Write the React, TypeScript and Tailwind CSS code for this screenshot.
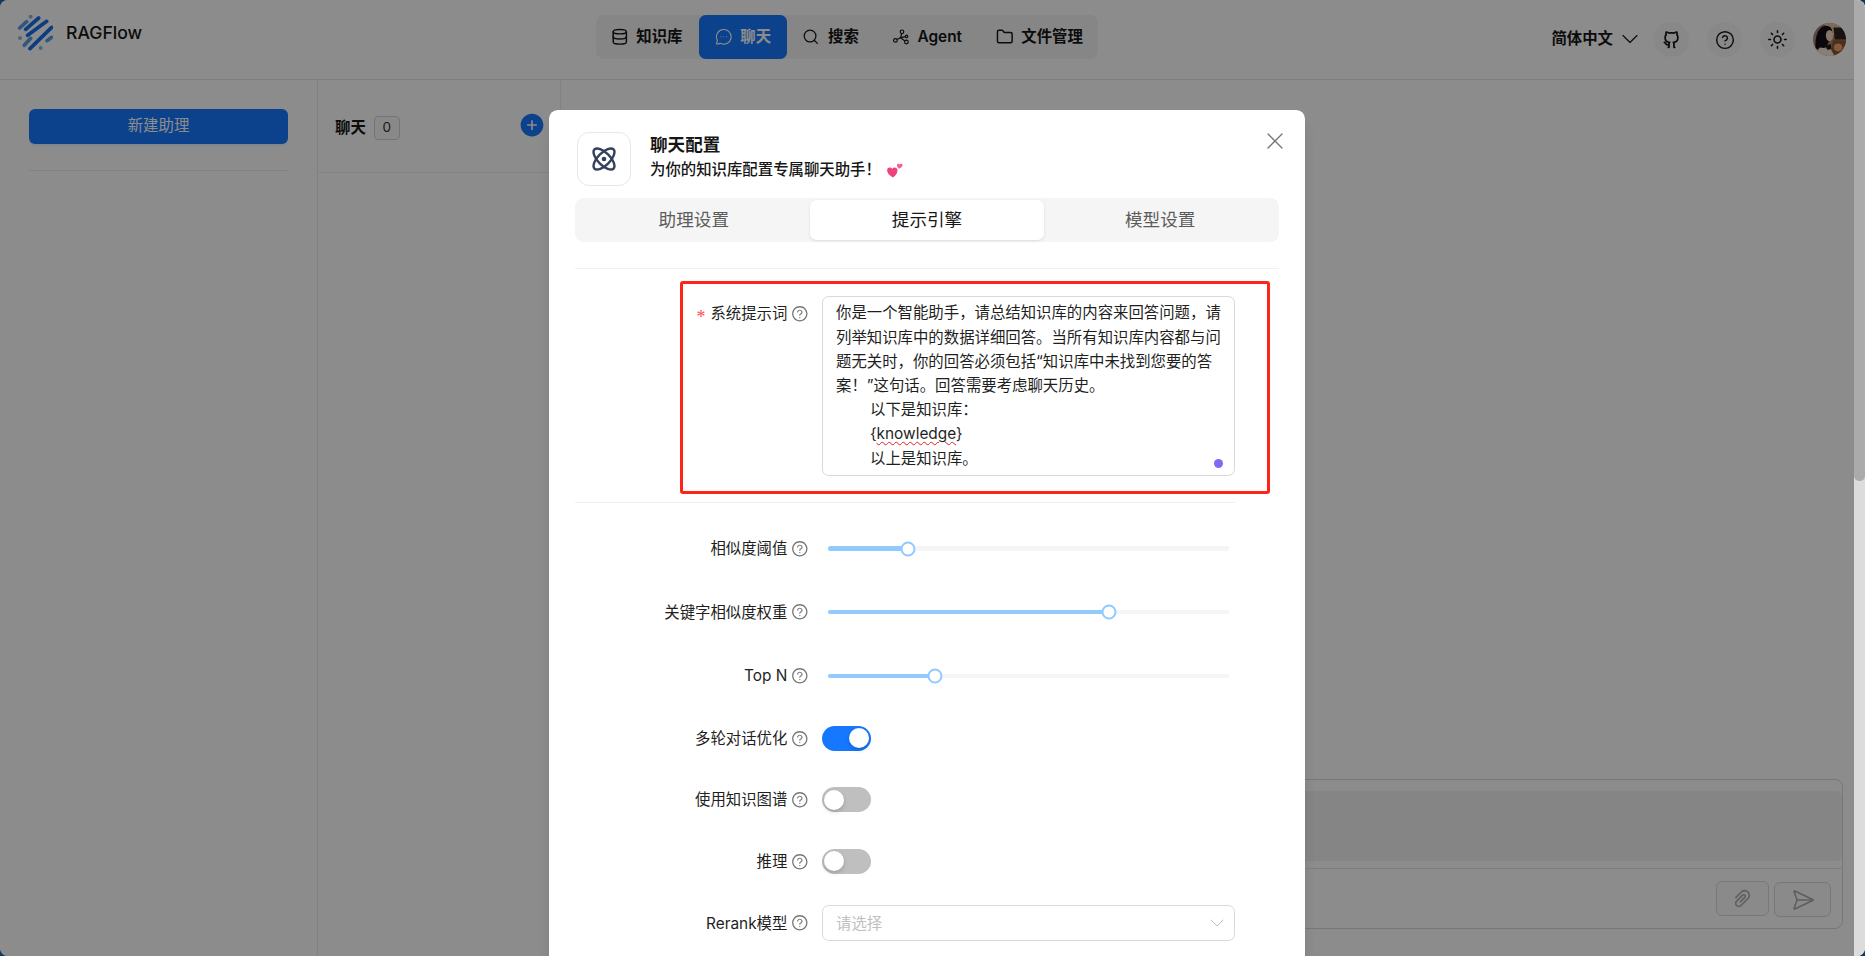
import { Atom, ChevronDown, CircleHelp, Database, Folder, MessageCircleMore, Search, SendHorizontal, Sun, X } from "lucide-react";
import { AiFillPlusCircle, AiOutlinePaperClip, AiOutlineQuestionCircle } from "react-icons/ai";
import { RiGithubLine } from "react-icons/ri";

function Logo() {
  return (
    <svg viewBox="21 21 108 108" className="h-[36px] w-[36px] flex-none" fill="none" strokeLinecap="round">
      <path d="M47 64 86 30M53 82 110 40M60 122 125 58" stroke="#1670ec" strokeWidth="11" />
      <path d="M29 60 50 41M43 112 62 91M111 98 125 88" stroke="#5a9fe6" strokeWidth="11" />
      <circle cx="62" cy="26" r="6" fill="#8db9dc" />
      <circle cx="30" cy="90" r="6" fill="#8db9dc" />
      <circle cx="92" cy="120" r="6" fill="#8db9dc" />
    </svg>
  );
}

function AgentIcon() {
  return (
    <svg viewBox="0 0 16 16" className="h-[16px] w-[16px]" fill="none" stroke="currentColor" strokeWidth="1.2">
      <circle cx="9" cy="2.8" r="1.8" />
      <circle cx="2.4" cy="11.4" r="1.8" />
      <circle cx="13.4" cy="13" r="1.8" />
      <circle cx="13.6" cy="7.4" r="1.2" />
      <path d="M8.6 4.6 7.6 8.6M4 10.5 7.4 8.8 12 12M7.8 8.6 12.4 7.6" />
    </svg>
  );
}

function Hearts() {
  return (
    <svg viewBox="0 0 16 15" className="h-[16px] w-[16px]">
      <path d="M6 15C2 12.6 0 10.2.1 7.4.2 4.8 3.4 3.9 5.2 6.2 7 4.2 10.4 5.1 10.5 7.7 10.6 10.5 8.6 13 6 15Z" fill="#f0417f" />
      <path d="M12 6.2C10.6 4.9 9.8 3.8 10 2.5 10.2 1 12 .7 12.8 1.9 13.8.8 15.6 1.3 15.6 2.8 15.6 4 14.4 5.2 12 6.2Z" fill="#fb5c8f" />
    </svg>
  );
}

function Avatar() {
  return (
    <svg viewBox="0 0 100 100" className="h-[33px] w-[33px] flex-none rounded-full">
      <defs>
        <filter id="soft">
          <feGaussianBlur stdDeviation="1.6" />
        </filter>
      </defs>
      <rect width="100" height="100" fill="#a08670" />
      <g filter="url(#soft)">
        <path d="M30 0h70v36H60Z" fill="#e0c3a4" />
        <path d="M62 14h38v36H66Z" fill="#33211a" />
        <path d="M60 52h40v48H55Z" fill="#8a5436" />
        <ellipse cx="76" cy="74" rx="13" ry="12" fill="#f0a06c" />
        <path d="M8 78C4 40 18 8 40 8 54 8 60 20 58 34L42 70 30 78Z" fill="#141013" />
        <ellipse cx="50" cy="38" rx="11" ry="17" fill="#f4d6bf" />
        <path d="M8 100 20 74 52 78 66 100Z" fill="#f2e8d8" />
        <path d="M38 70 54 64 56 78 44 82Z" fill="#1d171a" />
      </g>
    </svg>
  );
}

function Help() {
  return <AiOutlineQuestionCircle className="ml-[4px] flex-none text-[#767676]" size={17.6} />;
}

function Required() {
  return <span className="mr-[5px] mt-[6px] font-['Liberation_Serif',serif] text-[18px] leading-none text-[#ff4d4f]">*</span>;
}

function Row({ label, children, className }: { label: string; children: React.ReactNode; className: string }) {
  return (
    <div className={"flex items-center " + className}>
      <div className="flex w-[234px] flex-none items-center justify-end text-[15.4px] text-[#1f1f1f]">
        {label}
        <Help />
      </div>
      <div className="ml-[13px] w-[413px] flex-none">{children}</div>
    </div>
  );
}

function Slider({ value }: { value: number }) {
  return (
    <div className="px-[6px]">
      <div className="relative h-[4.4px] rounded-full bg-[#f5f5f5]">
        <div className="h-full rounded-full bg-[#91caff]" style={{ width: value + "%" }} />
        <div
          className="absolute top-1/2 h-[15px] w-[15px] -translate-x-1/2 -translate-y-1/2 rounded-full border-[2.4px] border-[#91caff] bg-white"
          style={{ left: value + "%" }}
        />
      </div>
    </div>
  );
}

function Toggle({ on }: { on?: boolean }) {
  return (
    <div className={"flex h-[25px] w-[49px] items-center rounded-full px-[2.2px] " + (on ? "justify-end bg-[#1677ff]" : "justify-start bg-[#bfbfbf]")}>
      <div className="h-[20px] w-[20px] rounded-full bg-white shadow-[0_2px_4px_rgba(0,35,11,0.2)]" />
    </div>
  );
}

const nav = [
  { name: "知识库", pad: "pl-[14.7px] pr-[16.6px]", icon: <Database size={17.6} /> },
  { name: "聊天", pad: "pl-[15.7px] pr-[15.6px]", icon: <MessageCircleMore size={17.6} strokeWidth={1.5} />, active: true },
  { name: "搜索", pad: "pl-[15.7px] pr-[15.6px]", icon: <Search size={17.6} strokeWidth={1.7} /> },
  { name: "Agent", pad: "pl-[17.5px] pr-[15.6px]", icon: <AgentIcon /> },
  { name: "文件管理", pad: "pl-[18px] pr-[15.6px]", icon: <Folder size={17.6} /> },
];

const promptLines = [
  "你是一个智能助手，请总结知识库的内容来回答问题，请",
  "列举知识库中的数据详细回答。当所有知识库内容都与问",
  "题无关时，你的回答必须包括“知识库中未找到您要的答",
  "案！”这句话。回答需要考虑聊天历史。",
];

export default function App() {
  return (
    <div className="h-[956px] w-[1865px] bg-[#12395f] font-[Inter,'Noto_Sans_CJK_SC',sans-serif]" lang="zh-CN">
      <div className="relative flex h-full overflow-hidden rounded-[8px] bg-white">
        <div className="flex w-[1854px] flex-none flex-col">
          <header className="flex h-[80px] flex-none border-b border-[#e5e5e5]">
            <div className="flex w-[596px] flex-none items-start pl-[17px] pt-[15px]">
              <Logo />
              <span className="ml-[13px] text-[17.6px] font-medium leading-[36px] text-[#161616]">RAGFlow</span>
            </div>
            <nav className="mt-[15px] flex h-[44px] items-center self-start rounded-[8px] bg-[#f5f5f5]">
              {nav.map((n) => (
                <div
                  key={n.name}
                  className={
                    "flex h-full items-center gap-[8px] rounded-[6.6px] text-[15.4px] font-semibold " +
                    n.pad +
                    " " +
                    (n.active ? "bg-[#1677ff] text-white" : "text-[#161616]")
                  }
                >
                  <span className="flex w-[17.6px] justify-center">{n.icon}</span>
                  {n.name}
                </div>
              ))}
            </nav>
            <div className="flex flex-1 items-center justify-end gap-[18px] pr-[8px] text-[#161616]">
              <div className="-mt-[2px] mr-[-5px] flex items-center gap-[3px] text-[15.4px] font-semibold">
                简体中文
                <ChevronDown size={28} strokeWidth={1} className="mr-[-3px]" />
              </div>
              <div className="flex h-[35px] w-[35px] items-center justify-center rounded-full bg-[#f7f7f7]">
                <RiGithubLine size={21} />
              </div>
              <div className="flex h-[35px] w-[35px] items-center justify-center rounded-full bg-[#f7f7f7]">
                <CircleHelp size={20} strokeWidth={1.7} />
              </div>
              <div className="flex h-[35px] w-[35px] items-center justify-center rounded-full bg-[#f7f7f7]">
                <Sun size={21} strokeWidth={1.8} />
              </div>
              <Avatar />
            </div>
          </header>

          <div className="flex min-h-0 flex-1">
            <aside className="w-[318px] flex-none border-r border-[#ededed] px-[29px] pt-[29px]">
              <div className="flex h-[35px] items-center justify-center rounded-[6px] bg-[#1677ff] pb-[2px] text-[15.4px] text-white shadow-[0_2px_0_rgba(5,145,255,0.1)]">
                新建助理
              </div>
              <div className="mt-[26px] border-t border-[#ededed]" />
            </aside>
            <section className="w-[243px] flex-none border-r border-[#ededed]">
              <div className="flex h-[93px] items-center justify-between border-b border-[#ededed] pl-[17px] pr-[15px] pt-[3px]">
                <div className="flex items-center gap-[8px]">
                  <span className="text-[15.4px] font-semibold text-[#161616]">聊天</span>
                  <span className="flex h-[24px] w-[26px] items-center justify-center rounded-[4px] border border-[#d4d4d4] bg-[#fafafa] text-[13.5px] text-[#333]">0</span>
                </div>
                <AiFillPlusCircle size={26} className="-mt-[6px] text-[#1677ff]" />
              </div>
            </section>
            <main className="flex flex-1 flex-col justify-end pb-[27px] pl-[10px] pr-[11px]">
              <div className="h-[150px] rounded-[8px] border border-[#d9d9d9] pt-[11px]">
                <div className="h-[70px] rounded-[6px] bg-[#f2f2f2]" />
                <div className="mt-[7px] border-t border-[#e5e5e5]" />
                <div className="mt-[12px] flex justify-end gap-[5px] pr-[11px]">
                  <div className="flex h-[35px] w-[53px] items-center justify-center rounded-[6px] border border-[#d9d9d9] bg-[#f5f5f5]/40 text-[#ababab]">
                    <AiOutlinePaperClip size={23} />
                  </div>
                  <div className="mt-[1px] flex h-[35px] w-[57px] items-center justify-center rounded-[6px] border border-[#d9d9d9] bg-[#f5f5f5]/40 text-[#ababab]">
                    <SendHorizontal size={24} strokeWidth={1.5} />
                  </div>
                </div>
              </div>
            </main>
          </div>
        </div>

        <div className="w-[11px] flex-none bg-[#dcdcdc]">
          <div className="h-[481px] rounded-b-[5px] bg-[#ababab]" />
        </div>

        {/* modal mask and dialog */}
        <div className="absolute inset-y-0 left-0 flex w-[1854px] justify-center bg-black/45 pt-[110px]">
          <div className="relative h-[1000px] w-[756px] flex-none rounded-[8.8px] bg-white px-[26px] pt-[22px] shadow-lg">
            <X size={28} strokeWidth={1.1} className="absolute right-[16.5px] top-[17px] text-[#737373]" />
            <div className="flex items-center pl-[2px]">
              <div className="flex h-[54px] w-[54px] flex-none items-center justify-center rounded-[12px] border border-[#e8e8e8] bg-white text-[#33415c]">
                <Atom size={28} strokeWidth={2} />
              </div>
              <div className="-mt-[5px] ml-[19px]">
                <div className="text-[17.6px] font-semibold leading-[26px] text-[#161616]">聊天配置</div>
                <div className="flex items-center text-[15.4px] font-medium leading-[24px] text-[#161616]">
                  为你的知识库配置专属聊天助手！
                  <span className="ml-[6px]">
                    <Hearts />
                  </span>
                </div>
              </div>
            </div>

            <div className="mt-[12px] flex h-[44px] items-center rounded-[8.8px] bg-[#f5f5f5] px-[2.2px] text-center text-[17.6px] text-[#5c5c5c]">
              <div className="flex-1">助理设置</div>
              <div className="flex h-[40px] flex-1 items-center justify-center rounded-[6.6px] bg-white text-[#161616] shadow-[0_1px_3px_rgba(0,0,0,0.1)]">提示引擎</div>
              <div className="flex-1">模型设置</div>
            </div>

            <div className="mt-[26px] border-t border-[#f0f0f0]" />

            <div className="mt-[27px] flex items-start">
              <div className="flex h-[35.2px] w-[234px] flex-none items-center justify-end text-[15.4px] text-[#1f1f1f]">
                <Required />
                系统提示词
                <Help />
              </div>
              <div className="relative ml-[13px] h-[180px] w-[413px] flex-none rounded-[6.6px] border border-[#d9d9d9] px-[13px] pt-[4.4px] text-[15.4px] leading-[24.2px] text-[#1f1f1f]">
                {promptLines.map((l) => (
                  <div key={l} className="whitespace-nowrap">{l}</div>
                ))}
                <div className="pl-[34px]">以下是知识库：</div>
                <div className="pl-[34px]">
                  {"{"}
                  <span className="underline decoration-[#e02020] decoration-wavy decoration-[1.2px] underline-offset-2">knowledge</span>
                  {"}"}
                </div>
                <div className="pl-[34px]">以上是知识库。</div>
                <div className="absolute bottom-[7px] right-[11px] h-[9px] w-[9px] rounded-full bg-[#7c6cf5]" />
              </div>
            </div>

            <div className="mr-[44px] mt-[26px] border-t border-[#f0f0f0]" />

            <div className="mt-[27px]">
              <Row label="相似度阈值" className="mb-[26.4px] h-[37.2px]"><Slider value={20} /></Row>
              <Row label="关键字相似度权重" className="mb-[26.4px] h-[37.2px]"><Slider value={70} /></Row>
              <Row label="Top N" className="mb-[26.4px] h-[37.2px]"><Slider value={26.67} /></Row>
              <Row label="多轮对话优化" className="mb-[26.4px] h-[35.2px]"><Toggle on /></Row>
              <Row label="使用知识图谱" className="mb-[26.4px] h-[35.2px]"><Toggle /></Row>
              <Row label="推理" className="mb-[26.4px] h-[35.2px]"><Toggle /></Row>
              <Row label="Rerank模型" className="mb-[26.4px] h-[35.2px]">
                <div className="flex h-[35.2px] items-center justify-between rounded-[6.6px] border border-[#d9d9d9] pl-[13px] pr-[5px] text-[15.4px] text-[#bfbfbf]">
                  请选择
                  <ChevronDown size={24} strokeWidth={1} />
                </div>
              </Row>
            </div>
          </div>
        </div>

        {/* red annotation around the prompt field */}
        <div className="pointer-events-none absolute left-[680px] top-[281px] h-[213px] w-[590px] rounded-[3px] border-[3px] border-[#ff2418]" />
      </div>
    </div>
  );
}
